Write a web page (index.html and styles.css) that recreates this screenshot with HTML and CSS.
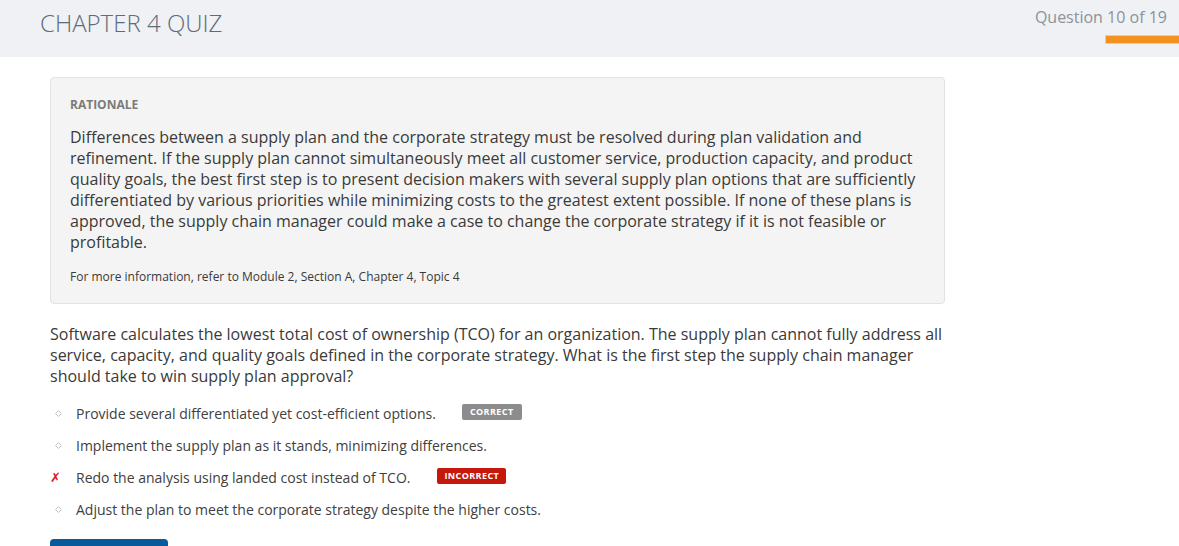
FILE: index.html
```html
<!DOCTYPE html>
<html>
<head>
<meta charset="utf-8">
<link rel="stylesheet" href="styles.css">
</head>
<body>
<header class="topbar">
  <h1 class="title">CHAPTER 4 QUIZ</h1>
  <div class="progress">
    <div class="progress-label">Question 10 of 19</div>
    <div class="progress-bar"></div>
  </div>
</header>
<main class="content">
  <section class="rationale">
    <div class="rationale-head">RATIONALE</div>
    <p class="rationale-text">Differences between a supply plan and the corporate strategy must be resolved during plan validation and refinement. If the supply plan cannot simultaneously meet all customer service, production capacity, and product quality goals, the best first step is to present decision makers with several supply plan options that are sufficiently differentiated by various priorities while minimizing costs to the greatest extent possible. If none of these plans is approved, the supply chain manager could make a case to change the corporate strategy if it is not feasible or profitable.</p>
    <p class="rationale-ref">For more information, refer to Module 2, Section A, Chapter 4, Topic 4</p>
  </section>
  <p class="question">Software calculates the lowest total cost of ownership (TCO) for an organization. The supply plan cannot fully address all service, capacity, and quality goals defined in the corporate strategy. What is the first step the supply chain manager should take to win supply plan approval?</p>
  <ul class="options">
    <li class="option">
      <span class="marker"><svg class="dot" width="7" height="7" viewBox="0 0 7 7"><path d="M3.5 0.5 L6.5 3.5 L3.5 6.5 L0.5 3.5 Z" fill="none" stroke="#c4c4c4" stroke-width="1"/></svg></span>
      <span class="option-text">Provide several differentiated yet cost-efficient options.</span>
      <span class="badge badge-correct">CORRECT</span>
    </li>
    <li class="option">
      <span class="marker"><svg class="dot" width="7" height="7" viewBox="0 0 7 7"><path d="M3.5 0.5 L6.5 3.5 L3.5 6.5 L0.5 3.5 Z" fill="none" stroke="#c4c4c4" stroke-width="1"/></svg></span>
      <span class="option-text">Implement the supply plan as it stands, minimizing differences.</span>
    </li>
    <li class="option">
      <span class="marker marker-x">✗</span>
      <span class="option-text">Redo the analysis using landed cost instead of TCO.</span>
      <span class="badge badge-incorrect">INCORRECT</span>
    </li>
    <li class="option">
      <span class="marker"><svg class="dot" width="7" height="7" viewBox="0 0 7 7"><path d="M3.5 0.5 L6.5 3.5 L3.5 6.5 L0.5 3.5 Z" fill="none" stroke="#c4c4c4" stroke-width="1"/></svg></span>
      <span class="option-text">Adjust the plan to meet the corporate strategy despite the higher costs.</span>
    </li>
  </ul>
  <button class="next-btn" aria-label="Next"></button>
</main>
</body>
</html>
```
FILE: styles.css
```css
html, body {
  margin: 0;
  padding: 0;
  background: #ffffff;
  font-family: "Open Sans", "Noto Sans", sans-serif;
  color: #3a3a3a;
  overflow: hidden;
}

.topbar {
  height: 57px;
  background: #eff1f5;
  display: flex;
  justify-content: space-between;
  align-items: flex-start;
}

.title {
  margin: 7px 0 0 40px;
  font-size: 24px;
  line-height: 32px;
  font-weight: 300;
  color: #5d6b7a;
}

.progress {
  display: flex;
  flex-direction: column;
  align-items: flex-end;
  padding-top: 7px;
}

.progress-label {
  font-size: 16px;
  line-height: 20px;
  color: #8b939b;
  margin-right: 12px;
}

.progress-bar {
  margin-top: 8px;
  width: 73px;
  height: 7px;
  background: #f39121;
  border: 1px solid #d9cfc4;
  border-right: none;
}

.content {
  padding: 20px 0 0 50px;
  width: 895px;
}

.rationale {
  background: #f4f4f4;
  border: 1px solid #e2e2e2;
  border-radius: 4px;
  padding: 19px 20px 18px 19px;
}

.rationale-head {
  font-size: 12px;
  line-height: 16px;
  font-weight: 700;
  color: #7b7b7b;
}

.rationale-text {
  margin: 14px 0 0 0;
  font-size: 16px;
  line-height: 21px;
  color: #3a3a3a;
}

.rationale-ref {
  margin: 16px 0 0 0;
  font-size: 12px;
  line-height: 16px;
  color: #3a3a3a;
}

.question {
  margin: 20px 0 0 0;
  font-size: 16px;
  line-height: 21px;
  color: #3a3a3a;
}

.options {
  list-style: none;
  margin: 10px 0 0 0;
  padding: 0;
}

.option {
  display: flex;
  align-items: center;
  height: 32px;
  font-size: 14px;
  color: #404040;
}

.marker {
  width: 26px;
  display: flex;
  align-items: center;
  justify-content: flex-start;
}

.dot {
  margin-left: 5px;
  margin-top: 1px;
}

.marker-x {
  color: #e8141c;
  font-weight: 700;
  font-style: italic;
  font-size: 13px;
  font-family: "DejaVu Sans", sans-serif;
}

.badge {
  margin-left: 26px;
  height: 16px;
  line-height: 16px;
  padding: 0 8px;
  border-radius: 2px;
  font-size: 9px;
  font-weight: 700;
  letter-spacing: 0.4px;
  color: #ffffff;
  margin-top: -3px;
}

.badge-correct {
  background: #8c8c8c;
}

.badge-incorrect {
  background: #c5180b;
  margin-left: 27px;
  padding: 0 7px;
}

.next-btn {
  display: block;
  margin-top: 14px;
  width: 118px;
  height: 38px;
  border: none;
  border-radius: 4px;
  background: #095a9b;
}
```
